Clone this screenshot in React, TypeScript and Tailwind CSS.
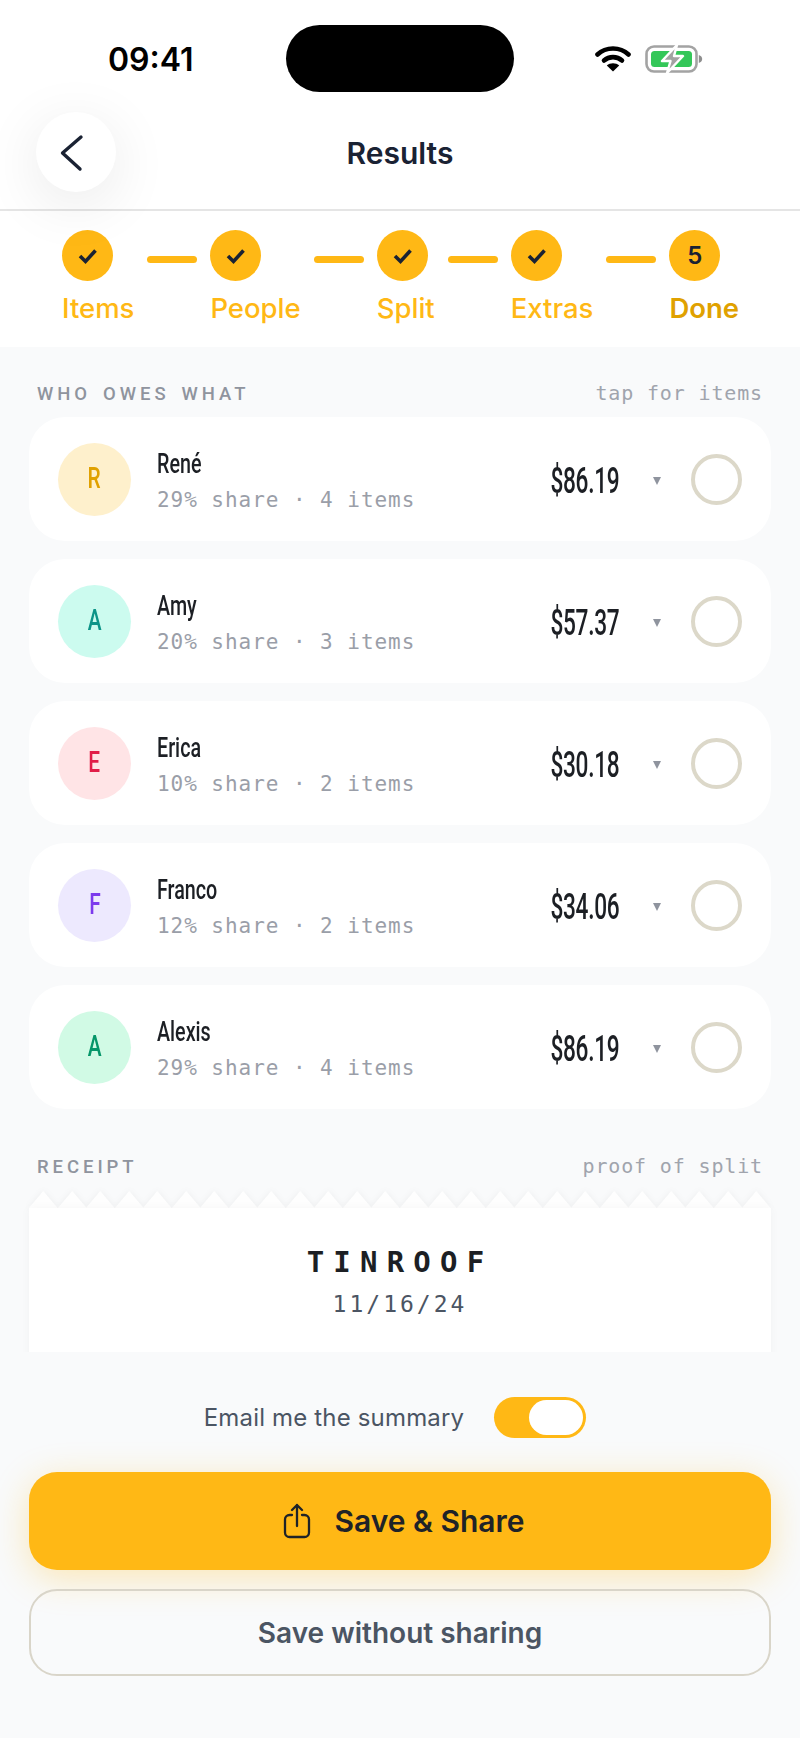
const people = [
  { name: "René", sub: "29% share · 4 items", amount: "$86.19", letter: "R", avatar: "bg-[#fef0cc] text-[#e0a100]" },
  { name: "Amy", sub: "20% share · 3 items", amount: "$57.37", letter: "A", avatar: "bg-[#ccfbef] text-[#0d9488]" },
  { name: "Erica", sub: "10% share · 2 items", amount: "$30.18", letter: "E", avatar: "bg-[#ffe4e6] text-[#e11d48]" },
  { name: "Franco", sub: "12% share · 2 items", amount: "$34.06", letter: "F", avatar: "bg-[#ede9fe] text-[#7c3aed]" },
  { name: "Alexis", sub: "29% share · 4 items", amount: "$86.19", letter: "A", avatar: "bg-[#d1fae5] text-[#059669]" },
];

const steps = ["Items", "People", "Split", "Extras", "Done"];

const mono = "font-['DejaVu_Sans_Mono',monospace]";

const StatusBar = () => (
  <div className="flex h-[112px] items-start pl-[108px] pt-[25px]">
    <div className="w-[178px] pt-[15px] text-[32px] leading-[40px] font-semibold text-black">09:41</div>
    <div className="h-[67px] w-[228px] rounded-[34px] bg-black" />
    <svg className="ml-[81px] mt-[20px]" width="36" height="27" viewBox="0 0 36 27" fill="none">
      <path d="M2.5 9.5C11 1.5 25 1.5 33.5 9.5" stroke="#000" strokeWidth="4.6" strokeLinecap="round" />
      <path d="M9 15.5C14 11 22 11 27 15.5" stroke="#000" strokeWidth="4.6" strokeLinecap="round" />
      <path d="M18 26.5L11.8 20.5C15 17.6 21 17.6 24.2 20.5Z" fill="#000" />
    </svg>
    <svg className="ml-[14px] mt-[20px]" width="58" height="28" viewBox="0 0 58 28" fill="none">
      <rect x="1.5" y="1.5" width="50" height="25" rx="7.5" stroke="#a3a3a3" strokeWidth="2.6" />
      <rect x="6" y="6" width="41" height="16" rx="3.5" fill="#34c759" />
      <path d="M53.8 10v8c2.2-.7 3.4-2.2 3.4-4s-1.2-3.3-3.4-4Z" fill="#8e8e8e" />
      <path d="M32 0L17 16h8.5L22 28l16-17h-9Z" fill="#a3a3a3" stroke="#fff" strokeWidth="2.4" strokeLinejoin="round" />
    </svg>
  </div>
);

const Header = () => (
  <div className="flex h-[99px] items-start border-b-2 border-[#e5e5e5] pl-[36px] pr-[116px]">
    <button className="relative z-10 flex h-[80px] w-[80px] shrink-0 items-center justify-center rounded-full bg-white shadow-[0_12px_60px_rgba(0,0,0,0.09)]">
      <svg width="80" height="80" viewBox="0 0 80 80" fill="none">
        <path d="M45 25L26.5 41L44 57" stroke="#1a2233" strokeWidth="3.4" strokeLinecap="round" strokeLinejoin="round" />
      </svg>
    </button>
    <div className="flex-1 pt-[23px] text-center text-[30px] leading-[36px] font-semibold text-[#1a2233]">Results</div>
  </div>
);

const Stepper = () => (
  <div className="flex h-[136px] items-start gap-[13px] bg-white pl-[62px] pt-[19px]">
    {steps.map((step, i) => (
      <div key={step} className="flex items-start gap-[13px]">
        {i > 0 && <div className="mt-[26px] h-[7px] w-[50px] rounded-full bg-[#ffb815]" />}
        <div className="flex flex-col items-start">
          <div className="flex h-[51px] w-[51px] items-center justify-center rounded-full bg-[#ffb815] text-[24px] font-semibold text-[#1a2233]">
            {i < 4 ? (
              <svg width="51" height="51" viewBox="0 0 51 51" fill="none">
                <path d="M18 26L23.5 31.5L33.5 20.5" stroke="#1a2233" strokeWidth="3.6" />
              </svg>
            ) : (
              "5"
            )}
          </div>
          <div className={`mt-[11px] text-[27.5px] leading-[32px] ${i < 4 ? "font-medium text-[#ffb815]" : "font-semibold text-[#e0a100]"}`}>
            {step}
          </div>
        </div>
      </div>
    ))}
  </div>
);

const SectionLabel = ({ left, right, className }: { left: string; right: string; className: string }) => (
  <div className={`flex h-6 items-center justify-between px-2 ${className}`}>
    <span className="pt-[3px] font-['Roboto',sans-serif] text-[18.5px] font-medium tracking-[3.95px] text-[#8f949e] [word-spacing:3.5px]">{left}</span>
    <span className={`text-[20px] tracking-[0.85px] text-[#a0a4ad] ${mono}`}>{right}</span>
  </div>
);

const PersonRow = ({ person }: { person: (typeof people)[number] }) => (
  <div className="flex h-[124px] items-center rounded-[36px] bg-white pl-[29px] pr-[29px]">
    <div className={`flex h-[73px] w-[73px] shrink-0 items-center justify-center rounded-full font-['Roboto',sans-serif] text-[29px] font-medium ${person.avatar}`}>
      <span className="inline-block scale-x-[0.72]">{person.letter}</span>
    </div>
    <div className="ml-[26px] mt-[3px] flex-1">
      <div className="origin-left scale-x-[0.73] font-['Roboto',sans-serif] text-[27px] leading-[32px] font-medium text-[#1c1f24]">
        {person.name}
      </div>
      <div className={`mt-[6px] text-[21px] leading-[28px] tracking-[0.95px] text-[#9a9ea8] ${mono}`}>{person.sub}</div>
    </div>
    <div className="mt-[4px] origin-right scale-x-[0.63] font-['Roboto',sans-serif] text-[36px] font-[550] tracking-[-0.5px] whitespace-nowrap text-[#1c1f24]">
      {person.amount}
    </div>
    <div className="ml-[34px] mr-[30px] mt-[3px] h-0 w-0 border-x-[4px] border-t-[8px] border-x-transparent border-t-[#8f949e]" />
    <div className="h-[51px] w-[51px] shrink-0 rounded-full border-[4px] border-[#dcd8c9]" />
  </div>
);

const ZigZag = () => (
  <div className="flex h-[17px] drop-shadow-[0_0_3px_rgba(0,0,0,0.05)]">
    {Array.from({ length: 26 }).map((_, i) => (
      <svg key={i} className="shrink-0" width="28.54" height="17" viewBox="0 0 28.54 17">
        <polygon points="0,17 14.27,0 28.54,17" fill="#fefefe" />
      </svg>
    ))}
  </div>
);

const Receipt = () => (
  <div>
    <ZigZag />
    <div className={`relative h-[240px] bg-white pt-[36px] text-center shadow-[0_0_10px_rgba(0,0,0,0.035)] ${mono}`}>
      <div className="text-[29px] leading-[36px] font-bold tracking-[9.2px] text-[#1c1f24]">TINROOF</div>
      <div className="mt-[8px] text-[23px] leading-[32px] tracking-[3px] text-[#4b5563]">11/16/24</div>
    </div>
  </div>
);

const Footer = () => (
  <div className="relative h-[386px] shrink-0 bg-[#f9fafb] px-[29px] pt-[45px]">
    <div className="flex h-[41px] items-center justify-center pr-[10px]">
      <span className="text-[24px] tracking-[0.17px] text-[#4b5563]">Email me the summary</span>
      <div className="ml-[30px] flex h-[41px] w-[92px] items-center justify-end rounded-full bg-[#ffb815] pr-[3px]">
        <div className="h-[35px] w-[54px] rounded-full bg-white" />
      </div>
    </div>
    <button className="mt-[34px] flex h-[98px] w-full items-center justify-center rounded-[28px] bg-[#ffb815] pl-[8px] text-[30px] font-semibold text-[#1f2328] shadow-[0_8px_36px_rgba(255,184,21,0.3)]">
      <svg className="mr-[23px]" width="28" height="36" viewBox="0 0 28 36" fill="none" stroke="#1f2328" strokeWidth="2.3" strokeLinecap="round" strokeLinejoin="round">
        <path d="M9 12H6.5C4 12 2 14 2 16.5V29.5C2 32 4 34 6.5 34H21.5C24 34 26 32 26 29.5V16.5C26 14 24 12 21.5 12H19" />
        <path d="M14 23V2M9 7L14 2L19 7" />
      </svg>
      Save &amp; Share
    </button>
    <button className="mt-[19px] flex h-[87px] w-full items-center justify-center rounded-[28px] border-2 border-[#d9d5c9] text-[28px] font-semibold text-[#4b5563]">
      Save without sharing
    </button>
  </div>
);

export default function App() {
  return (
    <div className="flex h-[1738px] w-[800px] flex-col overflow-hidden bg-[#f9fafb] font-['Inter',sans-serif]">
      <div className="relative z-10 bg-white">
        <StatusBar />
        <Header />
      </div>
      <Stepper />
      <div className="flex-1 overflow-hidden px-[29px] pt-[34px]">
        <SectionLabel left="WHO OWES WHAT" right="tap for items" className="mb-3" />
        <div className="flex flex-col gap-[18px]">
          {people.map((person) => (
            <PersonRow key={person.name} person={person} />
          ))}
        </div>
        <SectionLabel left="RECEIPT" right="proof of split" className="mb-[13px] mt-[45px]" />
        <Receipt />
      </div>
      <Footer />
    </div>
  );
}
